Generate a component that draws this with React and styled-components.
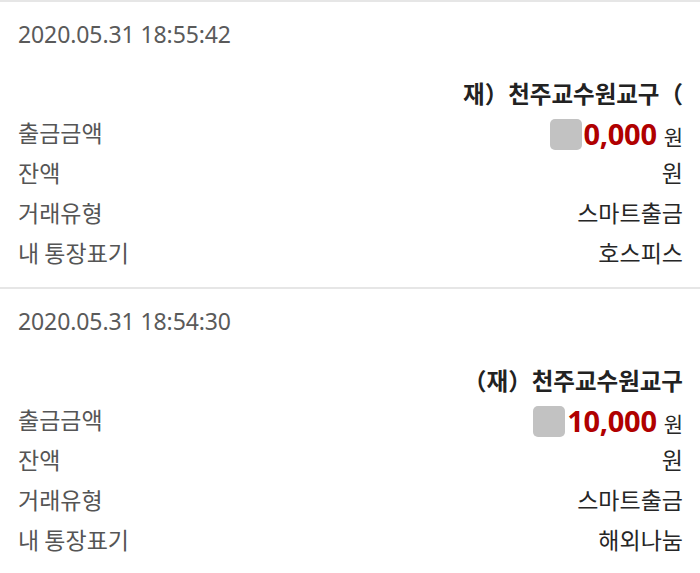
import styled, { createGlobalStyle } from "styled-components";

const GlobalStyle = createGlobalStyle`
  html, body {
    margin: 0;
    padding: 0;
    background: #ffffff;
  }
  body {
    font-family: "Noto Sans", "Noto Sans CJK KR", sans-serif;
    -webkit-font-smoothing: antialiased;
  }
`;

const List = styled.div`
  width: 700px;
  background: #ffffff;
`;

const Card = styled.section`
  border-top: 2px solid #e6e6e6;
  padding: 0 17px 15px 18px;

  &:last-child {
    padding-bottom: 0;
  }
`;

const DateLine = styled.div`
  padding-top: 20px;
  font-size: 23px;
  line-height: 24px;
  color: #5a5a5a;
  letter-spacing: -0.1px;
`;

const Payee = styled.div`
  margin-top: 28px;
  text-align: right;
  font-family: "Noto Sans CJK KR", sans-serif;
  font-size: 23.5px;
  font-weight: 700;
  line-height: 38px;
  color: #222222;
  white-space: nowrap;
`;

const Row = styled.div`
  display: flex;
  align-items: center;
  justify-content: space-between;
  height: 40px;
`;

const Label = styled.span`
  font-family: "Noto Sans CJK KR", sans-serif;
  font-size: 23px;
  color: #555555;
  white-space: pre;
`;

const Value = styled.span`
  font-family: "Noto Sans CJK KR", sans-serif;
  font-size: 23px;
  color: #262626;
`;

const Amount = styled.div`
  display: flex;
  align-items: baseline;
  padding-top: 5px;
`;

const Mask = styled.span`
  align-self: center;
  width: 32px;
  height: 31px;
  margin-right: 2px;
  border-radius: 5px;
  background: #c2c2c2;
`;

const Figure = styled.span`
  font-family: "Noto Sans", sans-serif;
  font-size: 29px;
  font-weight: 700;
  line-height: 32px;
  color: #b00000;
  letter-spacing: -0.3px;
`;

const Unit = styled.span`
  margin-left: 7px;
  font-family: "Noto Sans CJK KR", sans-serif;
  font-size: 21px;
  line-height: 32px;
  color: #262626;
`;

const transactions = [
  {
    date: "2020.05.31 18:55:42",
    payee: "재）천주교수원교구（",
    amount: "0,000",
    type: "스마트출금",
    memo: "호스피스",
  },
  {
    date: "2020.05.31 18:54:30",
    payee: "（재）천주교수원교구",
    amount: "10,000",
    type: "스마트출금",
    memo: "해외나눔",
  },
];

function Transaction({ item }) {
  return (
    <Card>
      <DateLine>{item.date}</DateLine>
      <Payee>{item.payee}</Payee>
      <Row>
        <Label>출금금액</Label>
        <Amount>
          <Mask />
          <Figure>{item.amount}</Figure>
          <Unit>원</Unit>
        </Amount>
      </Row>
      <Row>
        <Label>잔액</Label>
        <Value>원</Value>
      </Row>
      <Row>
        <Label>거래유형</Label>
        <Value>{item.type}</Value>
      </Row>
      <Row>
        <Label>내 통장표기</Label>
        <Value>{item.memo}</Value>
      </Row>
    </Card>
  );
}

export default function App() {
  return (
    <>
      <GlobalStyle />
      <List>
        {transactions.map((t) => (
          <Transaction key={t.date} item={t} />
        ))}
      </List>
    </>
  );
}
